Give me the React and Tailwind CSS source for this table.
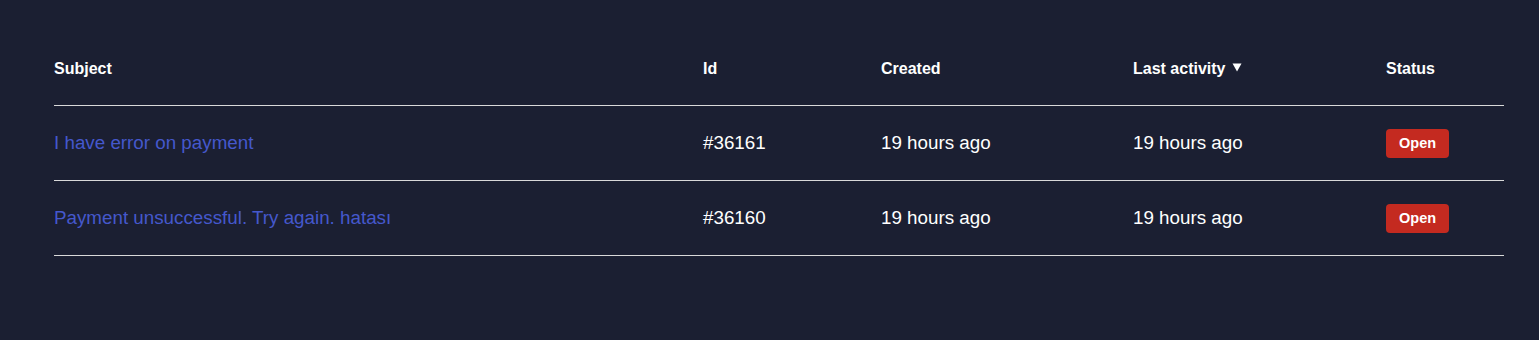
import React from "react";

const COLS = "grid grid-cols-[649px_178px_252px_253px_1fr]";

const tickets = [
    { subject: "I have error on payment", id: "#36161", created: "19 hours ago", last: "19 hours ago", status: "Open" },
    { subject: "Payment unsuccessful. Try again. hatası", id: "#36160", created: "19 hours ago", last: "19 hours ago", status: "Open" },
];

function SortCaret() {
    return (
        <svg width="10" height="9" viewBox="0 0 10 9" className="ml-[7px] mt-[-3px]">
            <path d="M0.5 0.5 H9.5 L5 8.5 Z" fill="#ffffff" />
        </svg>
    );
}

export default function App() {
    return (
        <div
            className="min-h-[340px] w-full bg-[#1b1f32] pl-[54px] pr-[35px] pt-[60px]"
            style={{ fontFamily: '"Liberation Sans", Arial, sans-serif' }}
        >
            {/* header */}
            <div className={`${COLS} border-b border-[#d9d9d9] pb-[27px] text-[16px] font-bold leading-[18px] text-white`}>
                <div>Subject</div>
                <div>Id</div>
                <div>Created</div>
                <div className="flex items-center">
                    Last activity
                    <SortCaret />
                </div>
                <div>Status</div>
            </div>

            {/* rows */}
            {tickets.map((t) => (
                <div
                    key={t.id}
                    className={`${COLS} h-[75px] items-center border-b border-[#d9d9d9] text-[18.8px] leading-[22px] text-white`}
                >
                    <a href="#" className="text-[#4558cc]">
                        {t.subject}
                    </a>
                    <div>{t.id}</div>
                    <div>{t.created}</div>
                    <div>{t.last}</div>
                    <div>
                        <span className="inline-flex h-[29px] items-center rounded-[4px] bg-[#c42a20] px-[13px] text-[14.5px] font-bold text-white">
                            {t.status}
                        </span>
                    </div>
                </div>
            ))}
        </div>
    );
}
